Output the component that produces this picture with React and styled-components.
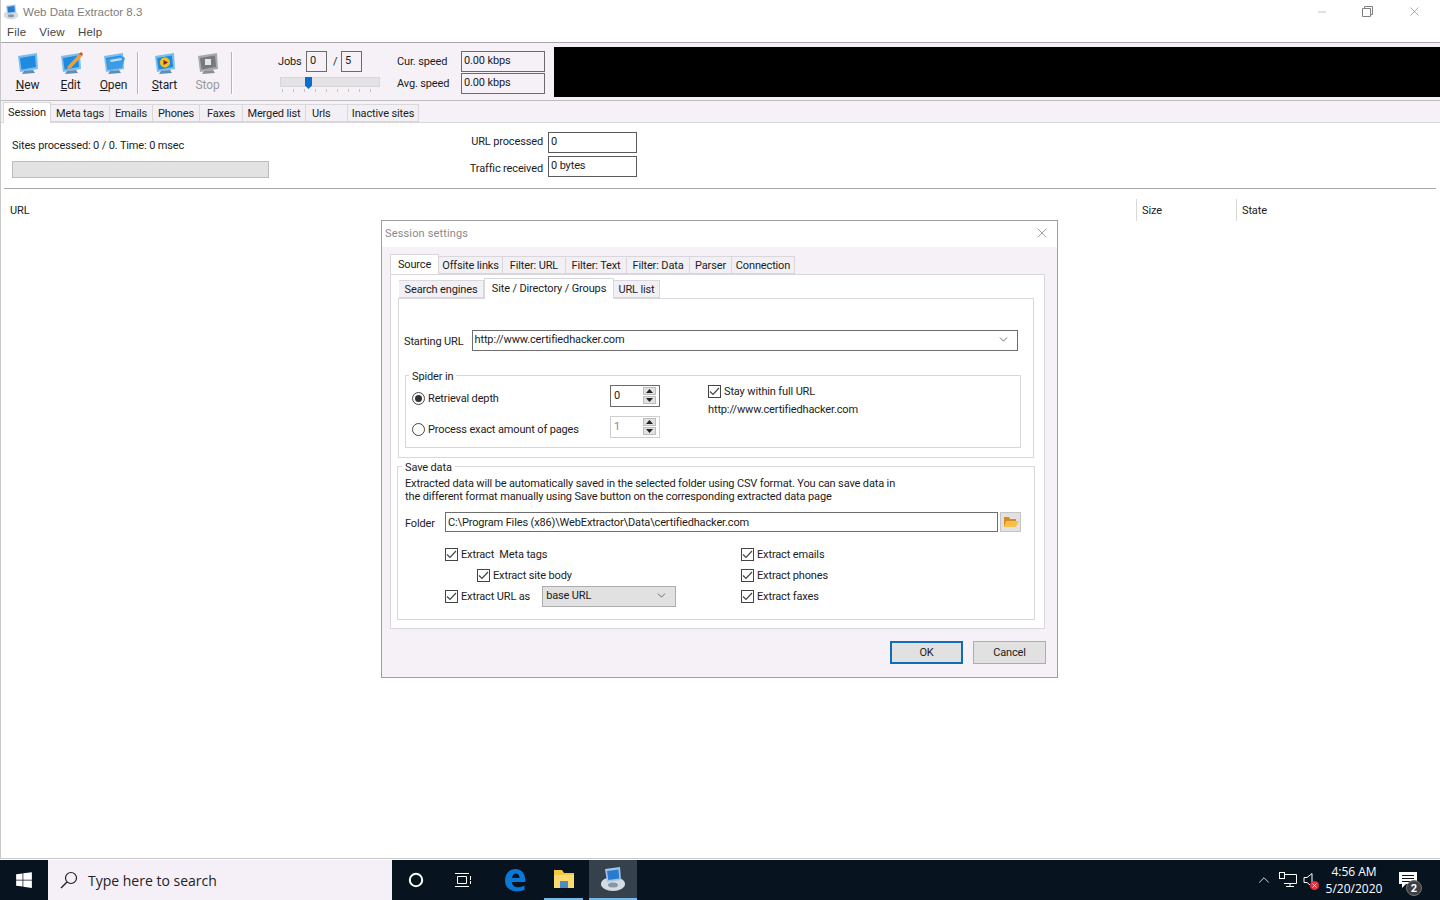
import React from "react";
import styled, { createGlobalStyle } from "styled-components";
import { FaWindows } from "react-icons/fa";
import { ChevronDown, ChevronUp, Minus, X } from "lucide-react";

const GlobalStyle = createGlobalStyle`
  html, body { margin: 0; padding: 0; background: #fff; }
  body { font-family: Roboto, "Liberation Sans", Arial, sans-serif; font-size: 11px; letter-spacing: -0.14px; color: #1c1c1c; }
  * { box-sizing: border-box; }
`;

const chrome = "#f5f1f7";
const line = "#d9d7db";

function Screen({ tone = "blue", children }) {
  const face = tone === "gray" ? "#77797c" : "#1f8be0";
  const rim = tone === "gray" ? "#a9a9a9" : "#7cbde9";
  return (
    <svg width="24" height="25" viewBox="0 0 24 25">
      <path d="M2 5 L21 2 L22 18 L4 21 Z" fill={rim} />
      <path d="M4 7 L19 4.5 L20 16 L5.5 18.5 Z" fill={face} />
      <path d="M8 20 L17 19 L19 22 L6 23 Z" fill={tone === "gray" ? "#8e8e8e" : "#5c8fb8"} />
      {children}
    </svg>
  );
}

function AppIcon({ size }) {
  return (
    <svg width={size} height={size} viewBox="0 0 26 26">
      <ellipse cx="13" cy="18" rx="12" ry="7" fill="#d4dbe2" />
      <ellipse cx="13" cy="19" rx="5" ry="2.5" fill="#8797a6" />
      <path d="M5 3 L20 1 L21 14 L7 16 Z" fill="#9fc6ea" />
      <path d="M7 5 L18.5 3.4 L19.3 12.6 L8.3 14 Z" fill="#2a7bd0" />
    </svg>
  );
}

const icons = {
  new: <Screen />,
  edit: (
    <Screen>
      <path d="M9 15 L20 3 L23 5 L12 17 L8 18 Z" fill="#f0a030" />
      <path d="M20 3 L22 1 L24 3 L23 5 Z" fill="#c9562a" />
    </Screen>
  ),
  open: (
    <Screen>
      <path d="M5 8 L20 5 L23 7 L20 17 L6 19 Z" fill="#3c9be6" />
      <path d="M8 9 L19 7 L20 9 L9 11 Z" fill="#bfe2f7" />
    </Screen>
  ),
  start: (
    <Screen>
      <circle cx="12" cy="11.5" r="5" fill="#f6c21c" />
      <path d="M10.5 9 L15 11.5 L10.5 14 Z" fill="#7b1f3a" />
    </Screen>
  ),
  stop: (
    <Screen tone="gray">
      <rect x="9" y="8" width="6" height="6" fill="#e6e6e6" />
    </Screen>
  ),
};

const toolbarButtons = [
  { id: "new", key: "N", rest: "ew", w: 43 },
  { id: "edit", key: "E", rest: "dit", w: 43 },
  { id: "open", key: "O", rest: "pen", w: 43 },
  { id: "start", key: "S", rest: "tart", w: 43, sep: true },
  { id: "stop", key: "", rest: "Stop", w: 43, off: true },
];

const mainTabs = [
  ["Session", 48], ["Meta tags", 59], ["Emails", 43], ["Phones", 47], ["Faxes", 43],
  ["Merged list", 63], ["Urls", 42, true], ["Inactive sites", 71],
];
const dialogTabs = [
  ["Source", 49], ["Offsite links", 64], ["Filter: URL", 63], ["Filter: Text", 61],
  ["Filter: Data", 63], ["Parser", 42], ["Connection", 63],
];
const subTabs = [["Search engines", 85], ["Site / Directory / Groups", 130], ["URL list", 46]];

function Check({ children, $indent }) {
  return (
    <CheckRow $indent={$indent}>
      <CheckBox>
        <svg width="11" height="9" viewBox="0 0 11 9">
          <path d="M1 4.5 L4 7.5 L10 1" fill="none" stroke="#444" strokeWidth="1.2" />
        </svg>
      </CheckBox>
      {children}
    </CheckRow>
  );
}

function Spinner({ value, off }) {
  return (
    <SpinBox $off={off}>
      <span>{value}</span>
      <SpinButtons>
        <SpinArrow><svg width="7" height="4"><path d="M3.5 0 L7 4 L0 4 Z" fill="#222" /></svg></SpinArrow>
        <SpinArrow><svg width="7" height="4"><path d="M0 0 L7 0 L3.5 4 Z" fill="#222" /></svg></SpinArrow>
      </SpinButtons>
    </SpinBox>
  );
}

export default function App() {
  return (
    <Page>
      <GlobalStyle />
      <Window>
        <TitleBar>
          <AppTitle>
            <AppIcon size={16} />
            Web Data Extractor 8.3
          </AppTitle>
          <WinControls>
            <Minus size={12} strokeWidth={1} />
            <svg width="11" height="11" viewBox="0 0 11 11" fill="none" stroke="currentColor">
              <path d="M0.5 2.5 H8.5 V10.5 H0.5 Z M2.5 2.5 V0.5 H10.5 V8.5 H8.5" />
            </svg>
            <X size={15} strokeWidth={1} />
          </WinControls>
        </TitleBar>
        <MenuBar>
          <span>File</span><span>View</span><span>Help</span>
        </MenuBar>
        <Toolbar>
          <ToolGroup>
            {toolbarButtons.map((b) => (
              <React.Fragment key={b.id}>
                {b.sep && <ToolSep />}
                <ToolButton $w={b.w} $off={b.off}>
                  {icons[b.id]}
                  <span><u>{b.key}</u>{b.rest}</span>
                </ToolButton>
              </React.Fragment>
            ))}
            <ToolSep />
          </ToolGroup>
          <JobsBlock>
            <JobsRow>
              <JobsLabel>Jobs</JobsLabel>
              <SmallField>0</SmallField>
              <Slash>/</Slash>
              <SmallField>5</SmallField>
            </JobsRow>
            <Slider>
              <SliderThumb />
            </Slider>
            <SliderTicks />
          </JobsBlock>
          <SpeedGrid>
            <span>Cur. speed</span><SpeedField>0.00 kbps</SpeedField>
            <span>Avg. speed</span><SpeedField>0.00 kbps</SpeedField>
          </SpeedGrid>
          <BlackPanel />
        </Toolbar>
        <TabStrip>
          {mainTabs.map(([label, w, left], i) => (
            <Tab key={label} $w={w} $active={i === 0} $left={left}>{label}</Tab>
          ))}
        </TabStrip>
        <Content>
          <SessionTop>
            <SessionLeft>
              <div>Sites processed: 0 / 0. Time: 0 msec</div>
              <Progress />
            </SessionLeft>
            <StatGrid>
              <StatLabel $up>URL processed</StatLabel><StatField>0</StatField>
              <StatLabel>Traffic received</StatLabel><StatField>0 bytes</StatField>
            </StatGrid>
          </SessionTop>
          <Rule />
          <TableHead>
            <span>URL</span>
            <HeadCell $w={100}>Size</HeadCell>
            <HeadCell $w={197}>State</HeadCell>
          </TableHead>
        </Content>
      </Window>

      <Dialog>
        <DialogTitle>
          Session settings
          <X size={16} strokeWidth={1} color="#777" />
        </DialogTitle>
        <DialogBody>
          <DialogTabs>
            {dialogTabs.map(([label, w], i) => (
              <Tab key={label} $w={w} $active={i === 0}>{label}</Tab>
            ))}
          </DialogTabs>
          <OuterPanel>
            <SubTabs>
              {subTabs.map(([label, w], i) => (
                <Tab key={label} $w={w} $active={i === 1}>{label}</Tab>
              ))}
            </SubTabs>
            <InnerPanel>
              <UrlRow>
                <span>Starting URL</span>
                <ComboField>
                  http://www.certifiedhacker.com
                  <ChevronDown size={13} strokeWidth={1.4} color="#444" />
                </ComboField>
              </UrlRow>
              <SpiderGroup>
                <GroupLegend>Spider in</GroupLegend>
                <SpiderGrid>
                  <RadioRow><Radio $on />Retrieval depth</RadioRow>
                  <Spinner value="0" />
                  <StayBlock>
                    <Check>Stay within full URL</Check>
                    <StayUrl>http://www.certifiedhacker.com</StayUrl>
                  </StayBlock>
                  <RadioRow><Radio />Process exact amount of pages</RadioRow>
                  <Spinner value="1" off />
                </SpiderGrid>
              </SpiderGroup>
            </InnerPanel>
            <SaveGroup>
              <GroupLegend>Save data</GroupLegend>
              <SaveNote>
                Extracted data will be automatically saved in the selected folder using CSV format. You can save data in
                <br />
                the different format manually using Save button on the corresponding extracted data page
              </SaveNote>
              <FolderRow>
                <span>Folder</span>
                <FolderField>C:\Program Files (x86)\WebExtractor\Data\certifiedhacker.com</FolderField>
                <BrowseButton>
                  <svg width="16" height="13" viewBox="0 0 16 13">
                    <path d="M1 2 L6 2 L7 4 L13 4 L13 12 L1 12 Z" fill="#d98a1a" />
                    <path d="M3 6 L16 6 L13 12 L1 12 Z" fill="#f6c04a" />
                  </svg>
                </BrowseButton>
              </FolderRow>
              <ExtractGrid>
                <ExtractColumn>
                  <Check>Extract&nbsp; Meta tags</Check>
                  <Check $indent>Extract site body</Check>
                  <UrlAsRow>
                    <Check>Extract URL as</Check>
                    <GraySelect>base URL<ChevronDown size={13} strokeWidth={1.4} color="#444" /></GraySelect>
                  </UrlAsRow>
                </ExtractColumn>
                <ExtractColumn>
                  <Check>Extract emails</Check>
                  <Check>Extract phones</Check>
                  <Check>Extract faxes</Check>
                </ExtractColumn>
              </ExtractGrid>
            </SaveGroup>
          </OuterPanel>
          <DialogButtons>
            <PushButton $primary>OK</PushButton>
            <PushButton>Cancel</PushButton>
          </DialogButtons>
        </DialogBody>
      </Dialog>

      <Taskbar>
        <StartButton><FaWindows size={18} color="#fff" /></StartButton>
        <SearchBox>
          <svg width="20" height="20" viewBox="0 0 20 20">
            <circle cx="12" cy="8" r="5.5" fill="none" stroke="#222" strokeWidth="1.2" />
            <path d="M8 12 L2 18" stroke="#222" strokeWidth="1.4" />
          </svg>
          Type here to search
        </SearchBox>
        <TaskIcon $w={48}>
          <svg width="16" height="16"><circle cx="8" cy="8" r="6.2" fill="none" stroke="#fff" strokeWidth="2" /></svg>
        </TaskIcon>
        <TaskIcon $w={46}>
          <svg width="18" height="16" viewBox="0 0 18 16" fill="none" stroke="#fff">
            <path d="M1 1.5 H15 M1 14.5 H15 M3.5 4.5 H12.5 V11.5 H3.5 Z M16.5 4 V8 M16.5 9 V12" />
          </svg>
        </TaskIcon>
        <TaskIcon $w={58}>
          <svg width="22" height="24" viewBox="0 0 22 24">
            <path
              fillRule="evenodd"
              fill="#0a78d7"
              d="M1 13 C1 5 6 1 11.500 1 C18 1 21.500 6 21.500 14 H8 C8 19 14 21 20.500 17.500 V22 C11 25.500 1 22 1 13 Z M8 10 H15.500 C15.500 7 14 5.500 11.800 5.500 C9.800 5.500 8.400 7 8 10 Z"
            />
          </svg>
        </TaskIcon>
        <TaskIcon $w={39} $open>
          <svg width="22" height="20" viewBox="0 0 22 20">
            <path d="M1 1 H9 L11 4 H21 V19 H1 Z" fill="#f4c83f" />
            <path d="M1 6 H21 V19 H1 Z" fill="#fbdb6e" />
            <rect x="7" y="12" width="8" height="7" fill="#4a8cc4" />
          </svg>
        </TaskIcon>
        <TaskIcon $w={48} $open $current>
          <AppIcon size={26} />
        </TaskIcon>
        <Tray>
          <ChevronUp size={18} strokeWidth={1.1} color="#fff" />
          <svg width="20" height="18" viewBox="0 0 20 18" fill="none" stroke="#fff">
            <path d="M6 3.5 H18.5 V12.5 H6 M12 12.5 V15.5 M8 15.5 H16" />
            <rect x="1.5" y="1.5" width="5" height="6" fill="#071420" />
          </svg>
          <VolumeIcon>
            <svg width="12" height="16" viewBox="0 0 12 16" fill="none" stroke="#fff">
              <path d="M1 5.5 H4 L9 1.5 V14.5 L4 10.5 H1 Z" />
            </svg>
            <Mute><X size={7} strokeWidth={3} color="#fff" /></Mute>
          </VolumeIcon>
          <Clock><span>4:56 AM</span><span>5/20/2020</span></Clock>
          <Notify>
            <svg width="20" height="18" viewBox="0 0 20 18">
              <path d="M1 1 H19 V13 H8 L4 17 V13 H1 Z" fill="#fff" />
              <path d="M4 4.500 H16 M4 7.500 H16 M4 10.500 H12" stroke="#071420" />
            </svg>
            <Badge>2</Badge>
          </Notify>
        </Tray>
      </Taskbar>
    </Page>
  );
}

const Page = styled.div`
  position: relative;
  width: 1440px;
  height: 900px;
  display: flex;
  flex-direction: column;
  overflow: hidden;
  background: #fff;
`;
const Window = styled.div`
  flex: 1;
  display: flex;
  flex-direction: column;
  border-left: 1px solid #c8c8c8;
  border-bottom: 1px solid #c8c8c8;
  margin-bottom: 1px;
`;
const TitleBar = styled.div`
  height: 22px;
  display: flex;
  align-items: center;
  justify-content: space-between;
  padding: 1px 18px 0 2px;
`;
const AppTitle = styled.div`
  display: flex;
  align-items: center;
  gap: 4px;
  color: #7d7d7d;
  font-family: "Liberation Sans", sans-serif;
  font-size: 11.5px;
  letter-spacing: 0;
`;
const WinControls = styled.div`
  display: flex;
  align-items: center;
  gap: 34px;
  color: #808080;
`;
const MenuBar = styled.div`
  height: 21px;
  display: flex;
  align-items: center;
  gap: 13px;
  padding: 0 6px 1px;
  border-bottom: 1px solid #a8a8a8;
  color: #444;
  font-family: "Liberation Sans", sans-serif;
  font-size: 11.5px;
  letter-spacing: 0.2px;
`;
const Toolbar = styled.div`
  height: 58px;
  display: flex;
  background: ${chrome};
  border-bottom: 1px solid #bdbdbd;
  padding-top: 5px;
`;
const ToolGroup = styled.div`
  width: 277px;
  display: flex;
  align-items: flex-start;
  padding-left: 5px;
`;
const ToolButton = styled.div`
  width: ${(p) => p.$w}px;
  display: flex;
  flex-direction: column;
  align-items: center;
  gap: 2px;
  padding-top: 3px;
  font-size: 12px;
  letter-spacing: -0.1px;
  color: ${(p) => (p.$off ? "#9a9a9a" : "#1c1c1c")};
`;
const ToolSep = styled.div`
  width: 2px;
  height: 42px;
  margin: 4px 4px 0 2px;
  background: #b5b5b5;
  border-right: 1px solid #fff;
`;
const JobsBlock = styled.div`
  width: 119px;
  display: flex;
  flex-direction: column;
  padding-top: 3px;
`;
const JobsRow = styled.div`
  display: flex;
  align-items: center;
  gap: 4px;
  margin-bottom: 5px;
`;
const JobsLabel = styled.span`
  width: 24px;
`;
const Slash = styled.span`
  margin-left: 2px;
  width: 4px;
`;
const SmallField = styled.div`
  width: 21px;
  height: 21px;
  border: 1px solid #6b6b6b;
  background: ${chrome};
  padding: 2px 3px;
`;
const Slider = styled.div`
  position: relative;
  width: 100px;
  height: 10px;
  margin-left: 2px;
  background: #e3e3e6;
  border: 1px solid #d7d7da;
`;
const SliderThumb = styled.div`
  position: absolute;
  left: 24px;
  top: -1px;
  width: 7px;
  height: 12px;
  background: #0a6ed1;
  clip-path: polygon(0 0, 100% 0, 100% 70%, 50% 100%, 0 70%);
`;
const SliderTicks = styled.div`
  width: 96px;
  height: 3px;
  margin: 2px 0 0 4px;
  background: repeating-linear-gradient(90deg, #c4c4c4 0 1px, transparent 1px 11px);
`;
const SpeedGrid = styled.div`
  width: 157px;
  display: grid;
  grid-template-columns: 64px 84px;
  grid-auto-rows: 21px;
  row-gap: 1px;
  align-items: center;
  align-content: start;
  padding-top: 3px;
`;
const SpeedField = styled.div`
  height: 21px;
  border: 1px solid #6b6b6b;
  padding: 2px;
`;
const BlackPanel = styled.div`
  flex: 1;
  height: 50px;
  margin-top: -1px;
  background: #000;
`;
const TabStrip = styled.div`
  height: 22px;
  display: flex;
  align-items: flex-end;
  padding-left: 2px;
  background: ${chrome};
  border-bottom: 1px solid ${line};
`;
const Tab = styled.div`
  width: ${(p) => p.$w}px;
  height: ${(p) => (p.$active ? "21px" : "18px")};
  margin-bottom: ${(p) => (p.$active ? "-1px" : "0")};
  display: flex;
  align-items: ${(p) => (p.$active ? "flex-start" : "center")};
  justify-content: ${(p) => (p.$left ? "flex-start" : "center")};
  padding: ${(p) => (p.$active ? "3px" : "1px")} 0 0 ${(p) => (p.$left ? "6px" : "0")};
  background: ${(p) => (p.$active ? "#fff" : "#f3f0f5")};
  border: 1px solid ${line};
  border-bottom: ${(p) => (p.$active ? "none" : `1px solid ${line}`)};
  border-left-width: ${(p) => (p.$active ? "1px" : "0")};
  white-space: nowrap;
`;
const Content = styled.div`
  flex: 1;
  display: flex;
  flex-direction: column;
`;
const SessionTop = styled.div`
  height: 65px;
  display: flex;
  padding: 9px 0 0 11px;
`;
const SessionLeft = styled.div`
  width: 456px;
  display: flex;
  flex-direction: column;
  gap: 9px;
  padding-top: 7px;
`;
const Progress = styled.div`
  width: 257px;
  height: 17px;
  background: #e2e2e2;
  border: 1px solid #bcbcbc;
`;
const StatGrid = styled.div`
  display: grid;
  grid-template-columns: 80px 89px;
  row-gap: 3px;
  grid-auto-rows: 21px;
  align-items: center;
  align-content: start;
`;
const StatLabel = styled.span`
  white-space: nowrap;
  text-align: right;
  padding: ${(p) => (p.$up ? "0 5px 2px 0" : "3px 5px 0 0")};
`;
const StatField = styled.div`
  height: 21px;
  border: 1px solid #5a5a5a;
  padding: 2px;
`;
const Rule = styled.div`
  height: 1px;
  margin: 0 4px 0 3px;
  background: #a8a8a8;
`;
const TableHead = styled.div`
  height: 22px;
  margin-top: 10px;
  display: flex;
  align-items: center;
  padding: 0 7px 0 9px;
  span { flex: 1; }
`;
const HeadCell = styled.div`
  width: ${(p) => p.$w}px;
  height: 22px;
  display: flex;
  align-items: center;
  padding-left: 5px;
  border-left: 1px solid ${line};
`;
const Dialog = styled.div`
  position: absolute;
  left: 381px;
  top: 220px;
  width: 677px;
  height: 458px;
  display: flex;
  flex-direction: column;
  background: ${chrome};
  border: 1px solid #9e9e9e;
`;
const DialogTitle = styled.div`
  height: 26px;
  display: flex;
  align-items: center;
  justify-content: space-between;
  padding: 0 7px 2px 3px;
  background: #fff;
  color: #8a8a8a;
  letter-spacing: 0.15px;
`;
const DialogBody = styled.div`
  flex: 1;
  display: flex;
  flex-direction: column;
  padding: 6px 11px 0 8px;
`;
const DialogTabs = styled.div`
  height: 21px;
  display: flex;
  align-items: flex-end;
`;
const OuterPanel = styled.div`
  width: 655px;
  height: 355px;
  padding: 3px 10px 0 6px;
  background: #fff;
  border: 1px solid ${line};
`;
const SubTabs = styled.div`
  height: 20px;
  display: flex;
  align-items: flex-end;
  padding-left: 2px;
`;
const InnerPanel = styled.div`
  width: 636px;
  height: 160px;
  margin-left: 1px;
  padding: 31px 15px 0 5px;
  border: 1px solid ${line};
`;
const UrlRow = styled.div`
  display: flex;
  align-items: center;
  gap: 8px;
  span { padding-top: 2px; white-space: nowrap; }
`;
const ComboField = styled.div`
  flex: 1;
  height: 21px;
  display: flex;
  align-items: center;
  justify-content: space-between;
  padding: 0 7px 2px 2px;
  border: 1px solid #6e6e6e;
`;
const SpiderGroup = styled.fieldset`
  width: 616px;
  height: 80px;
  margin: 17px 0 0 1px;
  padding: 0 0 0 6px;
  border: 1px solid ${line};
`;
const GroupLegend = styled.legend`
  margin-left: -3px;
  padding: 2px 3px 0;
`;
const SpiderGrid = styled.div`
  display: grid;
  grid-template-columns: 198px 98px 1fr;
  grid-template-rows: 31px 31px;
  align-items: center;
  margin-top: -3px;
`;
const RadioRow = styled.div`
  display: flex;
  align-items: center;
  gap: 3px;
  padding-top: 5px;
  white-space: nowrap;
`;
const Radio = styled.div`
  width: 13px;
  height: 13px;
  border-radius: 50%;
  border: 1px solid #444;
  display: flex;
  align-items: center;
  justify-content: center;
  &::after {
    content: "";
    width: 7px;
    height: 7px;
    border-radius: 50%;
    background: ${(p) => (p.$on ? "#333" : "transparent")};
  }
`;
const SpinBox = styled.div`
  width: 50px;
  height: 22px;
  display: flex;
  align-items: center;
  justify-content: space-between;
  padding: 0 3px;
  border: 1px solid ${(p) => (p.$off ? "#cfcfcf" : "#6b6b6b")};
  color: ${(p) => (p.$off ? "#8a8a8a" : "inherit")};
`;
const SpinButtons = styled.div`
  display: flex;
  flex-direction: column;
  gap: 1px;
`;
const SpinArrow = styled.div`
  width: 13px;
  height: 8px;
  display: flex;
  align-items: center;
  justify-content: center;
  background: #e1e1e1;
  border: 1px solid #bdbdbd;
`;
const StayBlock = styled.div`
  grid-column: 3;
  grid-row: 1 / span 2;
  align-self: start;
  display: flex;
  flex-direction: column;
  gap: 5px;
  padding-top: 4px;
`;
const StayUrl = styled.div`
  white-space: nowrap;
`;
const SaveGroup = styled.fieldset`
  width: 638px;
  height: 161px;
  margin: 1px 0 0 0;
  padding: 0 13px 0 7px;
  border: 1px solid ${line};
`;
const SaveNote = styled.div`
  line-height: 13px;
  margin-top: 3px;
  white-space: nowrap;
`;
const FolderRow = styled.div`
  display: flex;
  align-items: center;
  height: 21px;
  margin-top: 8px;
  span { width: 40px; padding-top: 3px; }
`;
const FolderField = styled.div`
  width: 553px;
  height: 20px;
  display: flex;
  align-items: center;
  padding: 1px 2px 0;
  border: 1px solid #6e6e6e;
  white-space: nowrap;
`;
const BrowseButton = styled.div`
  width: 21px;
  height: 20px;
  margin-left: 2px;
  display: flex;
  align-items: center;
  justify-content: center;
  background: #e1e1e1;
  border: 1px solid #c4c4c4;
`;
const ExtractGrid = styled.div`
  display: grid;
  grid-template-columns: 296px 1fr;
  margin: 15px 0 0 40px;
`;
const ExtractColumn = styled.div`
  display: flex;
  flex-direction: column;
  gap: 7px;
`;
const CheckRow = styled.div`
  display: flex;
  align-items: center;
  gap: 3px;
  height: 14px;
  margin-left: ${(p) => (p.$indent ? "32px" : "0")};
  white-space: nowrap;
`;
const CheckBox = styled.div`
  width: 13px;
  height: 13px;
  display: flex;
  align-items: center;
  justify-content: center;
  border: 1px solid #444;
  background: #fff;
`;
const UrlAsRow = styled.div`
  display: flex;
  align-items: center;
  gap: 12px;
  height: 14px;
`;
const GraySelect = styled.div`
  width: 134px;
  height: 21px;
  display: flex;
  align-items: center;
  justify-content: space-between;
  padding: 0 7px 1px 3px;
  background: #e1e1e1;
  border: 1px solid #adadad;
`;
const DialogButtons = styled.div`
  display: flex;
  justify-content: flex-end;
  gap: 10px;
  margin: 12px 0 0 0;
`;
const PushButton = styled.div`
  width: 73px;
  height: 23px;
  display: flex;
  align-items: center;
  justify-content: center;
  background: #e1e1e1;
  border: ${(p) => (p.$primary ? "2px solid #0f6cb8" : "1px solid #adadad")};
`;
const Taskbar = styled.div`
  height: 40px;
  display: flex;
  align-items: stretch;
  background: #071420;
  color: #fff;
  font-size: 12px;
  letter-spacing: 0;
`;
const StartButton = styled.div`
  width: 48px;
  display: flex;
  align-items: center;
  justify-content: center;
`;
const SearchBox = styled.div`
  width: 344px;
  display: flex;
  align-items: center;
  gap: 9px;
  padding-left: 11px;
  background: #f5f0f8;
  color: #222;
  font-family: "Open Sans", sans-serif;
  font-size: 14px;
`;
const TaskIcon = styled.div`
  width: ${(p) => p.$w}px;
  margin-right: ${(p) => (p.$open ? "6px" : "0")};
  display: flex;
  align-items: center;
  justify-content: center;
  background: ${(p) => (p.$current ? "#35424d" : "transparent")};
  border-bottom: ${(p) => (p.$open ? "2px solid #76b9ed" : "none")};
`;
const Tray = styled.div`
  flex: 1;
  display: flex;
  align-items: center;
  justify-content: flex-end;
  gap: 5px;
  padding-right: 18px;
`;
const VolumeIcon = styled.div`
  position: relative;
  width: 16px;
  display: flex;
`;
const Mute = styled.div`
  position: absolute;
  right: 0;
  bottom: -2px;
  width: 9px;
  height: 9px;
  border-radius: 50%;
  background: #e0303c;
  display: flex;
  align-items: center;
  justify-content: center;
`;
const Clock = styled.div`
  width: 60px;
  display: flex;
  flex-direction: column;
  align-items: center;
  gap: 3px;
  font-family: "Open Sans", sans-serif;
  line-height: 14px;
`;
const Notify = styled.div`
  position: relative;
  width: 24px;
  margin-left: 9px;
  display: flex;
`;
const Badge = styled.div`
  position: absolute;
  right: 0;
  bottom: -7px;
  width: 16px;
  height: 16px;
  border-radius: 50%;
  background: #3a3f44;
  border: 1px solid #777;
  display: flex;
  align-items: center;
  justify-content: center;
  font-size: 11px;
  font-weight: 700;
`;
